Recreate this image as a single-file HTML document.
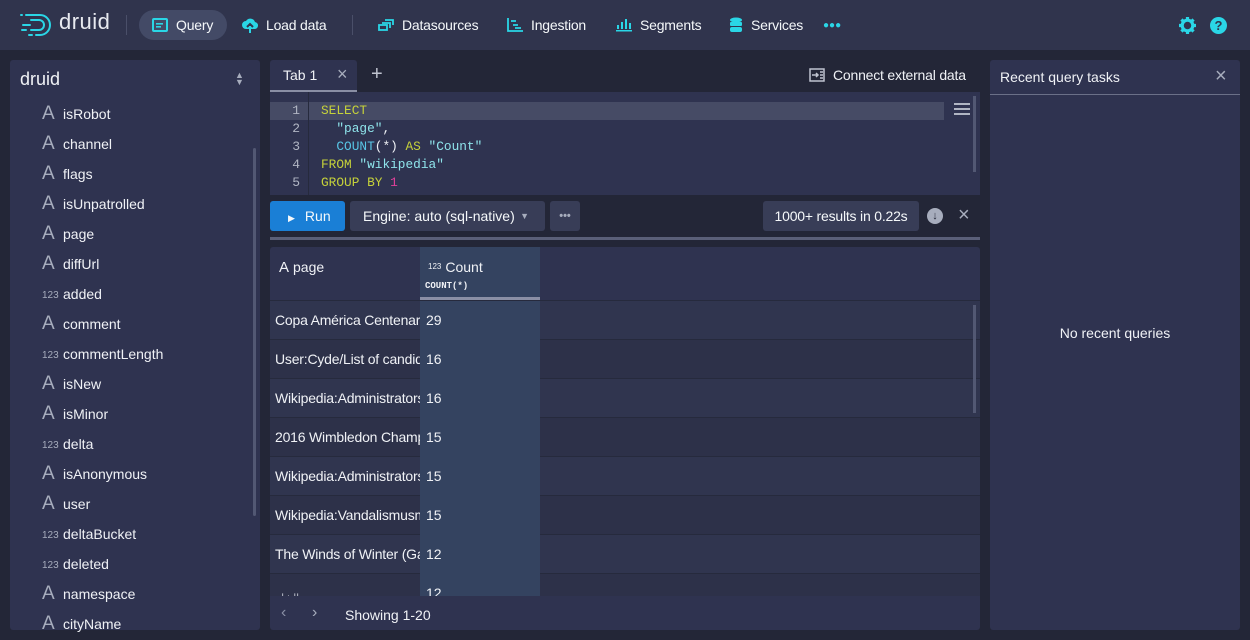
<!DOCTYPE html>
<html><head><meta charset="utf-8"><style>
*{box-sizing:border-box;margin:0;padding:0}
body{width:1250px;height:640px;background:#232637;font-family:"Liberation Sans",sans-serif;font-size:14px;color:#f0f2f6;position:relative;overflow:hidden}
.abs{position:absolute}
.nav{left:0;top:0;width:1250px;height:50px;background:#30344d}
.ni{position:absolute;top:0;height:50px;line-height:50px;font-size:14px;color:#f5f8fa;white-space:nowrap;letter-spacing:-0.2px}
.ni svg{vertical-align:middle;margin-right:8px;margin-top:-3px}
.panel{background:#2f3350;border-radius:3px}
.col{position:absolute;left:42px;height:30px;line-height:30px;white-space:nowrap}
.col .t{display:inline-block;width:21px;color:#a7adbd}
.col .A{font-size:19px;font-weight:300;vertical-align:top}
.col .n{font-size:10px;vertical-align:1px}
.code{font-family:"Liberation Mono",monospace;font-size:12.8px;position:absolute;left:321px;white-space:pre;line-height:18px}
.ln{position:absolute;left:270px;width:30px;text-align:right;font-family:"Liberation Mono",monospace;font-size:13px;color:#b0b5c3;line-height:18px}
.kw{color:#c6d23a}.st{color:#8ee3ea}.fn{color:#58c6e6}.nm{color:#e0409a}
.row{position:absolute;left:270px;width:710px;height:39px;line-height:38px;border-bottom:1px solid #262a3d}
.row .p{position:absolute;left:5px;width:145px;overflow:hidden;white-space:nowrap;letter-spacing:-0.2px}
.row .c{position:absolute;left:150px;width:120px;height:39px;background:#344360;padding-left:6px}
.btn{position:absolute;top:201px;height:30px;line-height:30px;border-radius:3px;background:#383d57;color:#f5f8fa}
</style></head><body>
<div class="abs nav">
 <svg class="abs" style="left:20px;top:12px" width="36" height="26" viewBox="0 0 36 26" fill="none" stroke="#2ad6e6" stroke-width="2" stroke-linecap="round"><path d="M6 3h14a10 10 0 0 1 0 20h-4M11 8h8a5 5 0 0 1 0 10h-8M3 13h7M2 18h4M9 23h3M1 3h1"/></svg>
 <div class="abs" style="left:59px;top:9px;font-size:22px;color:#e8eaf0;letter-spacing:0.5px">druid</div>
 <div class="abs" style="left:126px;top:15px;width:1px;height:20px;background:#4a4f69"></div>
 <div class="abs" style="left:139px;top:10px;width:88px;height:30px;border-radius:15px;background:#434a66"></div>
 <div class="ni" style="left:152px"><svg width="16" height="14" viewBox="0 0 16 14"><rect x="1" y="1" width="14" height="12" rx="1" fill="none" stroke="#2ad6e6" stroke-width="2"/><rect x="4" y="5" width="7" height="1.6" fill="#2ad6e6"/><rect x="4" y="8" width="5" height="1.6" fill="#2ad6e6"/></svg>Query</div>
 <div class="ni" style="left:242px"><svg width="16" height="16" viewBox="0 0 16 16"><path d="M4 12a4 4 0 0 1 0-8 5 5 0 0 1 9 1 3.5 3.5 0 0 1-1 7z" fill="#2ad6e6"/><path d="M8 16V8M5 10l3-3 3 3" stroke="#30344d" stroke-width="2" fill="none"/><path d="M8 16V9" stroke="#2ad6e6" stroke-width="2"/></svg>Load data</div>
 <div class="abs" style="left:352px;top:15px;width:1px;height:20px;background:#4a4f69"></div>
 <div class="ni" style="left:378px"><svg width="16" height="14" viewBox="0 0 16 14" fill="none" stroke="#2ad6e6" stroke-width="1.8"><rect x="1" y="7" width="8" height="5"/><path d="M4 5h8v5M7 2h8v5"/></svg>Datasources</div>
 <div class="ni" style="left:507px"><svg width="16" height="14" viewBox="0 0 16 14" fill="none" stroke="#2ad6e6" stroke-width="1.8"><path d="M1 0v13h15M4 3h5M6 7h5M8 10h6"/></svg>Ingestion</div>
 <div class="ni" style="left:616px"><svg width="16" height="14" viewBox="0 0 16 14" fill="#2ad6e6"><rect x="1" y="7" width="2" height="4"/><rect x="5" y="4" width="2" height="7"/><rect x="9" y="1" width="2" height="10"/><rect x="13" y="5" width="2" height="6"/><rect x="0" y="12" width="16" height="1.5"/></svg>Segments</div>
 <div class="ni" style="left:729px"><svg width="14" height="16" viewBox="0 0 14 16" fill="#2ad6e6"><ellipse cx="7" cy="3" rx="6" ry="2.5"/><rect x="1" y="5" width="12" height="4" rx="1"/><rect x="1" y="10" width="12" height="5" rx="2"/></svg>Services</div>
 <div class="ni" style="left:823px;color:#2ad6e6;font-size:10px;font-weight:bold;letter-spacing:0px;top:1px">●●●</div>
 <svg class="abs" style="left:1179px;top:17px" width="17" height="17" viewBox="0 0 16 16"><circle cx="8" cy="8" r="5" fill="none" stroke="#2ad6e6" stroke-width="3"/><g stroke="#2ad6e6" stroke-width="3"><path d="M8 0v3M8 13v3M0 8h3M13 8h3M2.3 2.3l2 2M11.7 11.7l2 2M2.3 13.7l2-2M11.7 4.3l2-2"/></g></svg>
 <div class="abs" style="left:1210px;top:17px;width:17px;height:17px;border-radius:50%;background:#2ad6e6;color:#30344d;font-weight:bold;font-size:13px;text-align:center;line-height:17px">?</div>
</div>

<div class="abs panel" style="left:10px;top:60px;width:250px;height:570px"></div>
<div class="abs" style="left:20px;top:69px;font-size:18px">druid</div>
<div class="abs" style="left:235px;top:72px;color:#a7adbd;font-size:9px;line-height:7px">▲<br>▼</div>
<div class="abs" style="left:253px;top:148px;width:3px;height:368px;background:#525873;border-radius:2px"></div>
<div class="col" style="top:99px"><span class="t A">A</span>isRobot</div>
<div class="col" style="top:129px"><span class="t A">A</span>channel</div>
<div class="col" style="top:159px"><span class="t A">A</span>flags</div>
<div class="col" style="top:189px"><span class="t A">A</span>isUnpatrolled</div>
<div class="col" style="top:219px"><span class="t A">A</span>page</div>
<div class="col" style="top:249px"><span class="t A">A</span>diffUrl</div>
<div class="col" style="top:279px"><span class="t n">123</span>added</div>
<div class="col" style="top:309px"><span class="t A">A</span>comment</div>
<div class="col" style="top:339px"><span class="t n">123</span>commentLength</div>
<div class="col" style="top:369px"><span class="t A">A</span>isNew</div>
<div class="col" style="top:399px"><span class="t A">A</span>isMinor</div>
<div class="col" style="top:429px"><span class="t n">123</span>delta</div>
<div class="col" style="top:459px"><span class="t A">A</span>isAnonymous</div>
<div class="col" style="top:489px"><span class="t A">A</span>user</div>
<div class="col" style="top:519px"><span class="t n">123</span>deltaBucket</div>
<div class="col" style="top:549px"><span class="t n">123</span>deleted</div>
<div class="col" style="top:579px"><span class="t A">A</span>namespace</div>
<div class="col" style="top:609px"><span class="t A">A</span>cityName</div>

<div class="abs" style="left:270px;top:60px;width:87px;height:32px;background:#2f3350;border-radius:3px 3px 0 0;border-bottom:2px solid #8a8fa5"></div>
<div class="abs" style="left:283px;top:67px">Tab 1</div>
<div class="abs" style="left:337px;top:64px;color:#a7adbd;font-size:18px">×</div>
<div class="abs" style="left:371px;top:63px;color:#c0c4d0;font-size:20px">+</div>
<svg class="abs" style="left:809px;top:68px" width="16" height="14" viewBox="0 0 16 14" fill="none" stroke="#c0c4d0" stroke-width="1.5"><rect x="1" y="1" width="14" height="12"/><path d="M3 7h6M7 5l2 2-2 2M11 4h3M11 7h3M11 10h3"/></svg>
<div class="abs" style="left:833px;top:67px;letter-spacing:-0.2px">Connect external data</div>

<div class="abs" style="left:270px;top:92px;width:710px;height:103px;background:#2f3350"></div>
<div class="abs" style="left:270px;top:102px;width:674px;height:18px;background:#464b65"></div>
<div class="abs" style="left:308px;top:92px;width:1px;height:103px;background:#262a3d"></div>
<div class="abs" style="left:973px;top:96px;width:3px;height:76px;background:#525873"></div>
<div class="abs" style="left:954px;top:103px;width:16px;height:12px;border-top:2px solid #b0b5c3;border-bottom:2px solid #b0b5c3"></div>
<div class="abs" style="left:954px;top:108px;width:16px;height:2px;background:#b0b5c3"></div>
<div class="ln" style="top:102px">1<br>2<br>3<br>4<br>5</div>
<div class="code" style="top:102px"><span class="kw">SELECT</span>
  <span class="st">"page"</span>,
  <span class="fn">COUNT</span>(*) <span class="kw">AS</span> <span class="st">"Count"</span>
<span class="kw">FROM</span> <span class="st">"wikipedia"</span>
<span class="kw">GROUP BY</span> <span class="nm">1</span></div>

<div class="btn" style="left:270px;width:75px;background:#1a7fd6;padding-left:18px"><span style="font-size:9px;margin-right:10px">▶</span>Run</div>
<div class="btn" style="left:350px;width:195px;padding-left:13px">Engine: auto (sql-native)<span style="position:absolute;right:16px;font-size:9px;color:#a7adbd">▼</span></div>
<div class="btn" style="left:550px;width:30px;text-align:center;color:#a7adbd;font-weight:bold;font-size:11px">•••</div>
<div class="btn" style="left:763px;width:156px;text-align:center;letter-spacing:-0.2px">1000+ results in 0.22s</div>
<div class="abs" style="left:927px;top:208px;width:16px;height:16px;border-radius:50%;background:#a7adbd;color:#232637;font-size:11px;text-align:center;line-height:16px;font-weight:bold">↓</div>
<div class="abs" style="left:958px;top:204px;color:#a7adbd;font-size:20px">×</div>
<div class="abs" style="left:270px;top:237px;width:710px;height:3px;background:#5a5f78"></div>

<div class="abs" style="left:270px;top:247px;width:710px;height:383px;background:#2f3350;border-radius:3px"></div>
<div class="abs" style="left:420px;top:247px;width:120px;height:53px;background:#344360;border-bottom:3px solid #8a8fa5"></div>
<div class="abs" style="left:270px;top:300px;width:710px;height:1px;background:#262a3d"></div>
<div class="abs" style="left:279px;top:259px"><span style="font-size:15px;margin-right:4px">A</span>page</div>
<div class="abs" style="left:428px;top:259px"><span style="font-size:8px;margin-right:4px;vertical-align:3px">123</span>Count</div>
<div class="abs" style="left:425px;top:281px;font-family:'Liberation Mono',monospace;font-size:9px;font-weight:bold">COUNT(*)</div>
<div class="row" style="top:301px;background:#30354f"><span class="p">Copa América Centenario</span><span class="c">29</span></div>
<div class="row" style="top:340px;background:#2d3149"><span class="p">User:Cyde/List of candidates</span><span class="c">16</span></div>
<div class="row" style="top:379px;background:#30354f"><span class="p">Wikipedia:Administrators</span><span class="c">16</span></div>
<div class="row" style="top:418px;background:#2d3149"><span class="p">2016 Wimbledon Championships</span><span class="c">15</span></div>
<div class="row" style="top:457px;background:#30354f"><span class="p">Wikipedia:Administrators</span><span class="c">15</span></div>
<div class="row" style="top:496px;background:#2d3149"><span class="p">Wikipedia:Vandalismusmeldung</span><span class="c">15</span></div>
<div class="row" style="top:535px;background:#30354f"><span class="p">The Winds of Winter (Game)</span><span class="c">12</span></div>
<div class="row" style="top:574px;height:22px;background:#2d3149;overflow:hidden;border:0"><span class="p" style="top:6px;font-size:10px;color:#c0c4d0">ربيع الشام</span><span class="c" style="height:22px;line-height:38px">12</span></div>
<div class="abs" style="left:973px;top:305px;width:3px;height:108px;background:#525873"></div>
<div class="abs" style="left:281px;top:604px;color:#8a8fa5;font-size:16px">‹</div>
<div class="abs" style="left:312px;top:604px;color:#a7adbd;font-size:16px">›</div>
<div class="abs" style="left:345px;top:607px">Showing 1-20</div>

<div class="abs panel" style="left:990px;top:60px;width:250px;height:570px"></div>
<div class="abs" style="left:990px;top:94px;width:250px;height:1px;background:#6b7088"></div>
<div class="abs" style="left:1000px;top:69px">Recent query tasks</div>
<div class="abs" style="left:1215px;top:65px;color:#a7adbd;font-size:20px">×</div>
<div class="abs" style="left:990px;top:325px;width:250px;text-align:center">No recent queries</div>
</body></html>
